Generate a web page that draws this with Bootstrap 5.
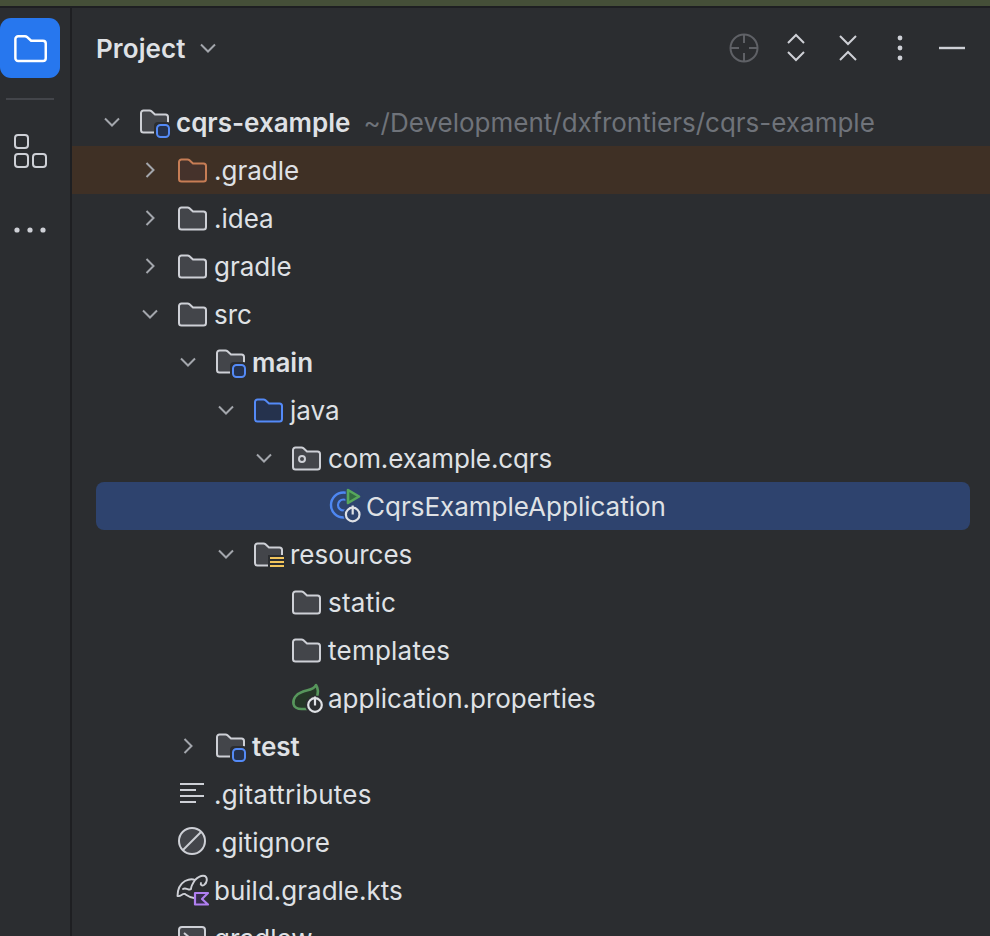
<!DOCTYPE html>
<html lang="en">
<head>
<meta charset="utf-8">
<title>Project</title>
<link href="https://cdn.jsdelivr.net/npm/bootstrap@5.3.0/dist/css/bootstrap.min.css" rel="stylesheet">
<style>
html,body{height:936px;overflow:hidden;background:#2b2d30;}
body{font-family:Inter,"Liberation Sans",sans-serif;font-size:26px;color:#dfe1e5;}
.top-strip{height:8px;background:#454f38;border-bottom:2px solid #1e1f22;}
.shell{height:928px;}
.side-bar{width:72px;border-right:2px solid #1e1f22;flex:none;}
.tool-tile{width:60px;height:60px;margin-top:10px;border-radius:11px;background:#2777ee;}
.side-rule{width:48px;height:2px;margin:20px 0 0 6px;background:#43454a;}
.side-icon{display:block;}
.panel-head{height:90px;padding:0 25px 10px 24px;}
.panel-title{font-weight:600;line-height:1;color:#dfe1e5;padding-top:2px;letter-spacing:.1px;}
.tree-row{height:48px;line-height:48px;white-space:nowrap;}
.tree-row span{padding-top:2px;}
.tree-row svg{flex:none;overflow:visible;}
.ico{width:32px;height:32px;margin-right:6px;}
.arr{width:32px;height:32px;margin-right:10px;}
.lvl-0{padding-left:24px;}
.lvl-1{padding-left:62px;}
.lvl-2{padding-left:100px;}
.lvl-3{padding-left:138px;}
.lvl-4{padding-left:176px;}
.leaf-1{padding-left:104px;}
.leaf-4{padding-left:218px;}
.row-excluded{background:#3f3025;}
.row-selected{margin:0 20px 0 24px;border-radius:8px;background:#2e436e;padding-left:232px;}
.tree-b{font-weight:600;}
.tree-path{color:#6f737a;margin-left:13px;}
.txt-wide{letter-spacing:.24px;}
.txt-tight{letter-spacing:-.12px;}
.fld{fill:#43454a;stroke:#ced0d6;stroke-width:2;}
.chev{fill:none;stroke:#a3a6ac;stroke-width:2;}
.hd-ic{fill:none;stroke:#ced0d6;stroke-width:2;}
.hd-slot{width:52px;height:32px;}
.hd-last{width:39px;}
</style>
</head>
<body>
<svg width="0" height="0" class="d-none" aria-hidden="true">
<defs>
<path id="fpath" d="M3 8a2.500 2.500 0 0 1 2.500-2.500h6a3 3 0 0 1 2 .8l3.500 3.200h10.500a2.500 2.500 0 0 1 2.500 2.500V25a2.500 2.500 0 0 1-2.500 2.500h-22A2.500 2.500 0 0 1 3 25z"/>
<symbol id="i-down" viewBox="0 0 32 32"><path class="chev" d="M9 12.500l7 7 7-7"/></symbol>
<symbol id="i-right" viewBox="0 0 32 32"><path class="chev" d="M12.500 9l7 7-7 7"/></symbol>
<symbol id="i-folder" viewBox="0 0 32 32"><use href="#fpath" class="fld"/></symbol>
<symbol id="i-module" viewBox="0 0 32 32" overflow="visible"><use href="#fpath" class="fld" transform="translate(0 -1)"/><rect x="16" y="16" width="17" height="17" rx="4" fill="#2b2d30"/><rect x="19" y="19" width="12" height="12" rx="3.500" fill="#25324d" stroke="#548af7" stroke-width="2"/></symbol>
<symbol id="i-java" viewBox="0 0 32 32"><use href="#fpath" fill="#25324d" stroke="#548af7" stroke-width="2"/></symbol>
<symbol id="i-excl" viewBox="0 0 32 32"><use href="#fpath" fill="#45322b" stroke="#c77d55" stroke-width="2"/></symbol>
<symbol id="i-pkg" viewBox="0 0 32 32"><use href="#fpath" class="fld"/><circle cx="12" cy="17" r="3" fill="none" stroke="#ced0d6" stroke-width="2"/></symbol>
<symbol id="i-res" viewBox="0 0 32 32" overflow="visible"><use href="#fpath" class="fld"/><rect x="16" y="17" width="17" height="14" fill="#2b2d30"/><path d="M18 20h14M18 24h14M18 28h14" stroke="#f2c55c" stroke-width="2"/></symbol>
<symbol id="i-app" viewBox="0 0 32 32" overflow="visible"><circle cx="15.500" cy="15" r="12.500" fill="none" stroke="#4e87f2" stroke-width="2.400"/><circle cx="15.500" cy="15" r="5.500" fill="none" stroke="#4e87f2" stroke-width="2.200"/><path d="M18 -3h11l6 9-6 10-1 2H17z" fill="#2e436e"/><circle cx="24.700" cy="24" r="9.500" fill="#2e436e"/><path d="M20 0 31 6.500 20 13z" fill="#336b42" stroke="#57a65c" stroke-width="2.600" stroke-linejoin="round"/><circle cx="24.700" cy="24.500" r="6.800" fill="none" stroke="#dfe1e5" stroke-width="2.200"/><path d="M24.700 15.500v9" stroke="#dfe1e5" stroke-width="2.200"/></symbol>
<symbol id="i-leaf" viewBox="0 0 32 32" overflow="visible"><path d="M26 3C24 8 17 8 12 10 6 12 2.500 17 3.500 22c.5 3 4 5 8 5h7l8-11C28.500 11 28 6 26 3z" fill="#253627" stroke="#57965c" stroke-width="2.600" stroke-linejoin="round"/><circle cx="25" cy="23" r="9.800" fill="#2b2d30"/><circle cx="25" cy="23" r="6.800" fill="none" stroke="#dfe1e5" stroke-width="2.200"/><path d="M25 14.500v9" stroke="#dfe1e5" stroke-width="2.200"/></symbol>
<symbol id="i-text" viewBox="0 0 32 32"><path d="M4 6h24M4 12h16M4 18h24M4 24h16" stroke="#ced0d6" stroke-width="2"/></symbol>
<symbol id="i-ignore" viewBox="0 0 32 32"><circle cx="16" cy="15" r="13" class="fld"/><path d="M7 24 25 6" stroke="#ced0d6" stroke-width="2"/></symbol>
<symbol id="i-gradle" viewBox="0 0 32 32" overflow="visible"><path d="M1.500 22C1.500 15 4 10 9 7c4-2 8-2 10-1 3-3 7-5 10-4 3 2 2 7-1 9-2 1-4 0-3-2M19 6c-2 3-4 6-4 9-2 2-5-2-8 0M1.500 22C5 23 6 19 9 20c3 2 5 4 9 4" fill="none" stroke="#ced0d6" stroke-width="1.900" stroke-linecap="round" stroke-linejoin="round"/><path d="M19 19H32L26 25 32 30.500H19z" fill="#352c4a" stroke="#b07ff0" stroke-width="2.200" stroke-linejoin="round"/></symbol>
<symbol id="i-term" viewBox="0 0 32 32"><rect x="3" y="5" width="26" height="23" rx="3" class="fld"/><path d="M8 11l6 5-6 5" fill="none" stroke="#ced0d6" stroke-width="2"/></symbol>
</defs>
</svg>

<div class="top-strip"></div>
<div class="shell d-flex">
  <nav class="side-bar">
    <div class="tool-tile d-flex align-items-center justify-content-center">
      <svg width="36" height="36" viewBox="0 0 32 32"><path d="M3 8a2.500 2.500 0 0 1 2.500-2.500h6a3 3 0 0 1 2 .8l3.500 3.200h10.500a2.500 2.500 0 0 1 2.500 2.500V25a2.500 2.500 0 0 1-2.500 2.500h-22A2.500 2.500 0 0 1 3 25z" fill="none" stroke="#fff" stroke-width="2.200"/></svg>
    </div>
    <div class="side-rule"></div>
    <svg class="side-icon mt-4" width="70" height="44" viewBox="0 0 70 44"><g fill="none" stroke="#ced0d6" stroke-width="2"><rect x="15" y="11" width="13" height="13" rx="3"/><rect x="15" y="30" width="13" height="13" rx="3"/><rect x="33" y="30" width="13" height="13" rx="3"/></g></svg>
    <svg class="side-icon" width="70" height="85" viewBox="0 0 70 85"><g fill="#ced0d6"><circle cx="17" cy="62" r="2.600"/><circle cx="30" cy="62" r="2.600"/><circle cx="43" cy="62" r="2.600"/></g></svg>
  </nav>
  <main class="flex-grow-1 overflow-hidden">
    <header class="panel-head d-flex align-items-center">
      <span class="panel-title">Project</span>
      <svg class="ms-2" width="28" height="28" viewBox="0 0 28 28"><path d="M7 10.500l7 7 7-7" fill="none" stroke="#a3a6ac" stroke-width="2"/></svg>
      <div class="ms-auto d-flex align-items-center">
        <div class="hd-slot d-flex justify-content-center"><svg width="32" height="32" viewBox="0 0 32 32"><g fill="none" stroke="#5f6166" stroke-width="2"><circle cx="16" cy="16" r="13.500"/><path d="M16 2v9M16 21v9M2 16h9M21 16h9"/></g></svg></div>
        <div class="hd-slot d-flex justify-content-center"><svg width="32" height="32" viewBox="0 0 32 32"><path class="hd-ic" d="M8 11l8-8 8 8M8 20l8 8 8-8"/></svg></div>
        <div class="hd-slot d-flex justify-content-center"><svg width="32" height="32" viewBox="0 0 32 32"><path class="hd-ic" d="M8 4l8 8 8-8M8 28l8-8 8 8"/></svg></div>
        <div class="hd-slot d-flex justify-content-center"><svg width="32" height="32" viewBox="0 0 32 32"><g fill="#ced0d6"><circle cx="16" cy="6" r="2.400"/><circle cx="16" cy="16" r="2.400"/><circle cx="16" cy="26" r="2.400"/></g></svg></div>
        <div class="hd-slot hd-last d-flex justify-content-end"><svg width="26" height="32" viewBox="0 0 26 32"><path d="M0 16h26" stroke="#ced0d6" stroke-width="2.400"/></svg></div>
      </div>
    </header>
    <div class="tree-list">
      <div class="tree-row d-flex align-items-center lvl-0"><svg class="arr"><use href="#i-down"/></svg><svg class="ico"><use href="#i-module"/></svg><span class="tree-b">cqrs-example</span><span class="tree-path">~/Development/dxfrontiers/cqrs-example</span></div>
      <div class="tree-row d-flex align-items-center lvl-1 row-excluded"><svg class="arr"><use href="#i-right"/></svg><svg class="ico"><use href="#i-excl"/></svg><span>.gradle</span></div>
      <div class="tree-row d-flex align-items-center lvl-1"><svg class="arr"><use href="#i-right"/></svg><svg class="ico"><use href="#i-folder"/></svg><span>.idea</span></div>
      <div class="tree-row d-flex align-items-center lvl-1"><svg class="arr"><use href="#i-right"/></svg><svg class="ico"><use href="#i-folder"/></svg><span>gradle</span></div>
      <div class="tree-row d-flex align-items-center lvl-1"><svg class="arr"><use href="#i-down"/></svg><svg class="ico"><use href="#i-folder"/></svg><span>src</span></div>
      <div class="tree-row d-flex align-items-center lvl-2"><svg class="arr"><use href="#i-down"/></svg><svg class="ico"><use href="#i-module"/></svg><span class="tree-b">main</span></div>
      <div class="tree-row d-flex align-items-center lvl-3"><svg class="arr"><use href="#i-down"/></svg><svg class="ico"><use href="#i-java"/></svg><span>java</span></div>
      <div class="tree-row d-flex align-items-center lvl-4"><svg class="arr"><use href="#i-down"/></svg><svg class="ico"><use href="#i-pkg"/></svg><span class="txt-tight">com.example.cqrs</span></div>
      <div class="tree-row d-flex align-items-center row-selected"><svg class="ico"><use href="#i-app"/></svg><span>CqrsExampleApplication</span></div>
      <div class="tree-row d-flex align-items-center lvl-3"><svg class="arr"><use href="#i-down"/></svg><svg class="ico"><use href="#i-res"/></svg><span>resources</span></div>
      <div class="tree-row d-flex align-items-center leaf-4"><svg class="ico"><use href="#i-folder"/></svg><span class="txt-wide">static</span></div>
      <div class="tree-row d-flex align-items-center leaf-4"><svg class="ico"><use href="#i-folder"/></svg><span class="txt-wide">templates</span></div>
      <div class="tree-row d-flex align-items-center leaf-4"><svg class="ico"><use href="#i-leaf"/></svg><span>application.properties</span></div>
      <div class="tree-row d-flex align-items-center lvl-2"><svg class="arr"><use href="#i-right"/></svg><svg class="ico"><use href="#i-module"/></svg><span class="tree-b">test</span></div>
      <div class="tree-row d-flex align-items-center leaf-1"><svg class="ico"><use href="#i-text"/></svg><span class="txt-wide">.gitattributes</span></div>
      <div class="tree-row d-flex align-items-center leaf-1"><svg class="ico"><use href="#i-ignore"/></svg><span>.gitignore</span></div>
      <div class="tree-row d-flex align-items-center leaf-1"><svg class="ico"><use href="#i-gradle"/></svg><span>build.gradle.kts</span></div>
      <div class="tree-row d-flex align-items-center leaf-1"><svg class="ico"><use href="#i-term"/></svg><span>gradlew</span></div>
    </div>
  </main>
</div>
<script src="https://cdn.jsdelivr.net/npm/bootstrap@5.3.0/dist/js/bootstrap.bundle.min.js"></script>
</body>
</html>
